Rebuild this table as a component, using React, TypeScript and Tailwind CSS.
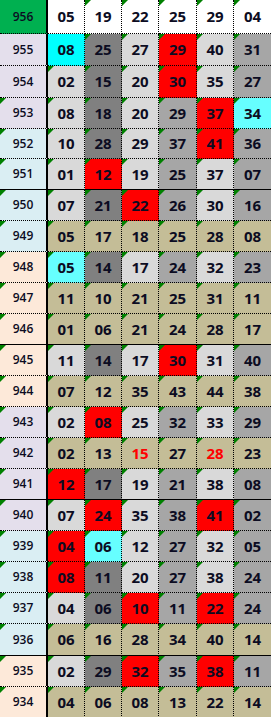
const BG: Record<string, string> = {
  l: "bg-[#d9d9d9]",
  d: "bg-[#808080]",
  m: "bg-[#a6a6a6]",
  r: "bg-[#ff0000]",
  c: "bg-[#00ffff]",
  k: "bg-[#66ffff]",
  t: "bg-[#c4bd97]",
  w: "bg-white",
};

const GRAY = ["l", "d", "l", "m", "l", "m"];

type Row = {
  n: string;
  side: string;
  h: string;
  cells: string;
  fill?: string; // whole row one colour (tan / white)
  solid?: boolean; // solid line under the row
  noMark?: boolean; // label has no green corner
};

const LAV = "bg-[#e4dfec]";
const BLUE = "bg-[#daeef3]";
const PEACH = "bg-[#fde9d9]";

const ROWS: Row[] = [
  { n: "956", side: "bg-[#00b050]", h: "h-[34px]", cells: "05- 19 22 25 29 04", fill: "w", noMark: true },
  { n: "955", side: LAV, h: "h-[32px]", cells: "08c- 25 27 29r 40 31", noMark: true },
  { n: "954", side: LAV, h: "h-[32px]", cells: "02 15 20 30r 35 27", noMark: true },
  { n: "953", side: LAV, h: "h-[31px]", cells: "08 18 20 29 37r 34k" },
  { n: "952", side: BLUE, h: "h-[30px]", cells: "10 28 29 37 41r 36" },
  { n: "951", side: BLUE, h: "h-[31px]", cells: "01 12r 19 25 37 07", solid: true },
  { n: "950", side: BLUE, h: "h-[31px]", cells: "07 21 22r 26 30 16" },
  { n: "949", side: BLUE, h: "h-[31px]", cells: "05 17 18 25 28 08", fill: "t" },
  { n: "948", side: PEACH, h: "h-[31px]", cells: "05k 14 17 24 32 23" },
  { n: "947", side: PEACH, h: "h-[31px]", cells: "11 10 21 25 31 11", fill: "t" },
  { n: "946", side: PEACH, h: "h-[31px]", cells: "01 06 21 24 28 17", fill: "t", solid: true },
  { n: "945", side: PEACH, h: "h-[31px]", cells: "11 14 17 30r 31 40" },
  { n: "944", side: PEACH, h: "h-[31px]", cells: "07 12 35 43 44 38", fill: "t" },
  { n: "943", side: LAV, h: "h-[31px]", cells: "02 08r 25 32 33 29" },
  { n: "942", side: LAV, h: "h-[31px]", cells: "02 13 15x 27 28x 23", fill: "t" },
  { n: "941", side: LAV, h: "h-[31px]", cells: "12r 17 19 21 38 08", solid: true },
  { n: "940", side: LAV, h: "h-[31px]", cells: "07 24r 35 38 41r 02" },
  { n: "939", side: BLUE, h: "h-[31px]", cells: "04r 06k 12 27 32 05" },
  { n: "938", side: BLUE, h: "h-[31px]", cells: "08r 11 20 27 38 24" },
  { n: "937", side: BLUE, h: "h-[31px]", cells: "04 06 10r 11 22r 24" },
  { n: "936", side: BLUE, h: "h-[32px]", cells: "06 16 28 34 40 14", fill: "t", solid: true },
  { n: "935", side: PEACH, h: "h-[31px]", cells: "02 29 32r 35 38r 11" },
  { n: "934", side: PEACH, h: "h-[31px]", cells: "04 06 08 13 22 14", fill: "t" },
];

function Mark() {
  return (
    <span className="absolute left-0 top-0 h-0 w-0 border-t-[6px] border-r-[6px] border-t-[#008000] border-r-transparent [border-style:solid]" />
  );
}

export default function App() {
  return (
    <div className="w-[271px] bg-white font-['Open_Sans',sans-serif] text-[#0c0c22]">
      {ROWS.map((row) => {
        const bottom = row.solid ? "[border-bottom-style:solid]" : "[border-bottom-style:dotted]";
        return (
          <div
            key={row.n}
            className={`grid grid-cols-[48px_37px_37px_37px_38px_37px_37px] ${row.h}`}
          >
            <div
              className={`relative flex items-center justify-center border-b border-r-2 border-black [border-right-style:solid] ${bottom} ${row.side} text-[12px] font-semibold`}
            >
              {!row.noMark && <Mark />}
              {row.n}
            </div>
            {row.cells.split(" ").map((c, i) => {
              const num = c.slice(0, 2);
              const flags = c.slice(2);
              let bg = row.fill ?? GRAY[i];
              if (flags.includes("r")) bg = "r";
              if (flags.includes("c")) bg = "c";
              if (flags.includes("k")) bg = "k";
              const red = flags.includes("x");
              const last = i === 5;
              return (
                <div
                  key={i}
                  className={`relative flex items-center justify-center border-b border-black ${
                    last ? "" : "border-r [border-right-style:dotted]"
                  } ${bottom} ${BG[bg]} text-[15px] font-bold ${red ? "text-[#ff0000]" : ""}`}
                >
                  {!flags.includes("-") && <Mark />}
                  {num}
                </div>
              );
            })}
          </div>
        );
      })}
    </div>
  );
}
